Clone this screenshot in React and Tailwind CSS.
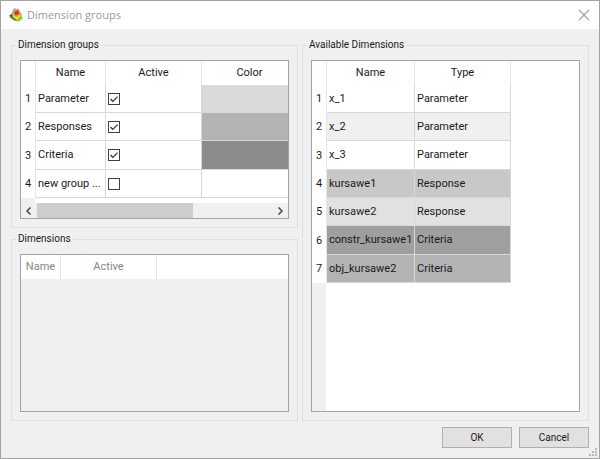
import { useState } from "react";

const initialGroups = [
  { id: 1, name: "Parameter", active: true, color: "bg-[#dadada]" },
  { id: 2, name: "Responses", active: true, color: "bg-[#b3b3b3]" },
  { id: 3, name: "Criteria", active: true, color: "bg-[#8b8b8b]" },
  { id: 4, name: "new group ...", active: false, color: "bg-white" },
];

const available = [
  { id: 1, name: "x_1", type: "Parameter", color: "bg-white" },
  { id: 2, name: "x_2", type: "Parameter", color: "bg-[#f0f0f0]" },
  { id: 3, name: "x_3", type: "Parameter", color: "bg-white" },
  { id: 4, name: "kursawe1", type: "Response", color: "bg-[#c8c8c8]" },
  { id: 5, name: "kursawe2", type: "Response", color: "bg-[#e1e1e1]" },
  { id: 6, name: "constr_kursawe1", type: "Criteria", color: "bg-[#9f9f9f]" },
  { id: 7, name: "obj_kursawe2", type: "Criteria", color: "bg-[#b3b3b3]" },
];

const AppIcon = () => (
  <svg className="size-4" viewBox="0 0 16 16" aria-hidden="true">
    <path d="M5 2.5l1.5-1.5 2 1 2-.5 1 2 2 3 1 5-4 3-5-1-4-3 2-4z" fill="#a9adb0" />
    <path d="M1 8.5l2.5-1.5 2 2.5 1.5 3.5-3-1.5z" fill="#565b60" />
    <path d="M4.5 9.5l2-5 3.5-1.5 2 4 2.5 4-4.5 3-3.5-2z" fill="#f4e819" />
    <path d="M6.5 4.5l3.5-1.5 1.5 3.5-2.5 2-3-1z" fill="#e9301c" />
    <path d="M6 7.5l3 1 2.5-2 .8 1.2-3 2.3-3.7-1z" fill="#f79a18" />
    <path d="M10 11.5l3-3 1.5 3-4.5 3z" fill="#6fd22c" />
    <path d="M3.5 10l2.5.5 4 3.5-3.5-.8z" fill="#2f9e44" />
  </svg>
);

const GroupBox = ({ title, className = "", children }) => (
  <fieldset
    className={`flex min-w-0 flex-col border border-[#dfdfdf] px-2 pt-2 pb-2 ${className}`}
  >
    <legend className="-ml-1 px-[2px] text-[10px] leading-[14px]">{title}</legend>
    {children}
  </fieldset>
);

const HeaderCell = ({ children }) => (
  <th
    scope="col"
    className="h-6 border-r border-[#e5e5e5] bg-white p-0 text-center font-normal"
  >
    {children}
  </th>
);

const RowNumber = ({ children }) => (
  <th
    scope="row"
    className="border-r border-[#e5e5e5] bg-white p-0 text-center font-normal"
  >
    {children}
  </th>
);

const cell =
  "overflow-hidden whitespace-nowrap border-r border-b border-[#d8d8d8] py-0 pr-0 pl-[2px]";
const tableStyle = "table-fixed border-separate border-spacing-0 leading-4";

const ScrollArrow = ({ d, label }) => (
  <button
    type="button"
    aria-label={label}
    className="flex w-[15px] items-center justify-center"
  >
    <svg className="h-2 w-2" viewBox="0 0 8 8" fill="none" stroke="#505050" strokeWidth="1.6">
      <path d={d} />
    </svg>
  </button>
);

const App = () => {
  const [groups, setGroups] = useState(initialGroups);

  const toggleGroup = (id) => {
    setGroups(
      groups.map((g) => (g.id === id ? { ...g, active: !g.active } : g))
    );
  };

  return (
    <div className="flex min-h-screen flex-col border border-[#a3a3a3] bg-[#f0f0f0] font-[Roboto,sans-serif] text-[11px] text-[#1a1a1a]">
      <header className="flex h-7 items-center bg-white pr-[9px] pl-[7px]">
        <AppIcon />
        <h1 className="ml-[3px] flex-1 font-['Open_Sans',sans-serif] text-[11px] text-[#9b9b9b]">
          Dimension groups
        </h1>
        <button type="button" aria-label="Close">
          <svg className="size-3" viewBox="0 0 12 12" stroke="#a0a0a0" strokeWidth="1.1">
            <path d="M1 1l10 10M11 1L1 11" />
          </svg>
        </button>
      </header>

      <main className="grid flex-1 grid-cols-2 gap-1 px-[10px] pt-[9px]">
        <div className="flex min-w-0 flex-col gap-1">
          <GroupBox title="Dimension groups">
            <div className="overflow-hidden border border-[#a0a3ae] bg-white">
              <table className={`w-[277px] ${tableStyle}`}>
                <colgroup>
                  <col className="w-[15px]" />
                  <col className="w-[70px]" />
                  <col className="w-24" />
                  <col className="w-24" />
                </colgroup>
                <thead>
                  <tr>
                    <HeaderCell />
                    <HeaderCell>Name</HeaderCell>
                    <HeaderCell>Active</HeaderCell>
                    <HeaderCell>Color</HeaderCell>
                  </tr>
                </thead>
                <tbody>
                  {groups.map((g) => (
                    <tr key={g.id} className="h-7 nth-[3n]:h-[29px]">
                      <RowNumber>{g.id}</RowNumber>
                      <td className={cell}>{g.name}</td>
                      <td className={cell}>
                        <label className="relative block size-3">
                          <input
                            type="checkbox"
                            aria-label={`${g.name} active`}
                            checked={g.active}
                            onChange={() => toggleGroup(g.id)}
                            className="peer block size-3 appearance-none border border-[#404040] bg-white"
                          />
                          <svg
                            className="pointer-events-none absolute inset-0 hidden size-3 peer-checked:block"
                            viewBox="0 0 12 12"
                            fill="none"
                            stroke="#303030"
                            strokeWidth="1.2"
                          >
                            <path d="M2.5 6l2.3 2.4L9.6 3.6" />
                          </svg>
                        </label>
                      </td>
                      <td className={`border-b border-[#d8d8d8] ${g.color}`} />
                    </tr>
                  ))}
                </tbody>
              </table>
              <div className="h-[5px] w-[14px] bg-[#f0f0f0]" />
              <div className="flex h-[15px] bg-[#f0f0f0] pr-px">
                <ScrollArrow label="Scroll left" d="M5.5 0.5L2 4l3.5 3.5" />
                <div className="flex-1 px-px">
                  <div className="h-full w-2/3 bg-[#cdcdcd]" />
                </div>
                <ScrollArrow label="Scroll right" d="M2.5 0.5L6 4 2.5 7.5" />
              </div>
            </div>
          </GroupBox>

          <GroupBox title="Dimensions" className="flex-1">
            <div className="flex-1 border border-[#a0a3ae] text-[#868686]">
              <div className="bg-white">
                <table className={`w-[136px] ${tableStyle}`}>
                  <colgroup>
                    <col className="w-10" />
                    <col className="w-24" />
                  </colgroup>
                  <thead>
                    <tr>
                      <HeaderCell>Name</HeaderCell>
                      <HeaderCell>Active</HeaderCell>
                    </tr>
                  </thead>
                </table>
              </div>
            </div>
          </GroupBox>
        </div>

        <GroupBox title="Available Dimensions">
          <div className="flex flex-1 flex-col border border-[#a0a3ae] bg-white">
            <table className={`w-[199px] ${tableStyle}`}>
              <colgroup>
                <col className="w-[15px]" />
                <col className="w-[88px]" />
                <col className="w-24" />
              </colgroup>
              <thead>
                <tr>
                  <HeaderCell />
                  <HeaderCell>Name</HeaderCell>
                  <HeaderCell>Type</HeaderCell>
                </tr>
              </thead>
              <tbody>
                {available.map((d) => (
                  <tr key={d.id} className="h-7 nth-[3n]:h-[29px]">
                    <RowNumber>{d.id}</RowNumber>
                    <td className={`${cell} ${d.color}`}>{d.name}</td>
                    <td className={`${cell} ${d.color}`}>{d.type}</td>
                  </tr>
                ))}
              </tbody>
            </table>
            <div className="w-[14px] flex-1 bg-[#f0f0f0]" />
          </div>
        </GroupBox>
      </main>

      <footer className="relative flex justify-end gap-[7px] px-[10px] pt-[6px] pb-[10px] text-[10px]">
        <button type="button" className="h-[21px] w-[70px] border border-[#b0b0b0] bg-[#e1e1e1]">
          OK
        </button>
        <button type="button" className="h-[21px] w-[70px] border border-[#b0b0b0] bg-[#e1e1e1]">
          Cancel
        </button>
        <svg
          className="absolute right-[2px] bottom-[2px] size-2"
          viewBox="0 0 8 8"
          fill="#b8b8b8"
          aria-hidden="true"
        >
          <path d="M6 0h2v2H6zM3 3h2v2H3zM6 3h2v2H6zM0 6h2v2H0zM3 6h2v2H3zM6 6h2v2H6z" />
        </svg>
      </footer>
    </div>
  );
};

export default App;
